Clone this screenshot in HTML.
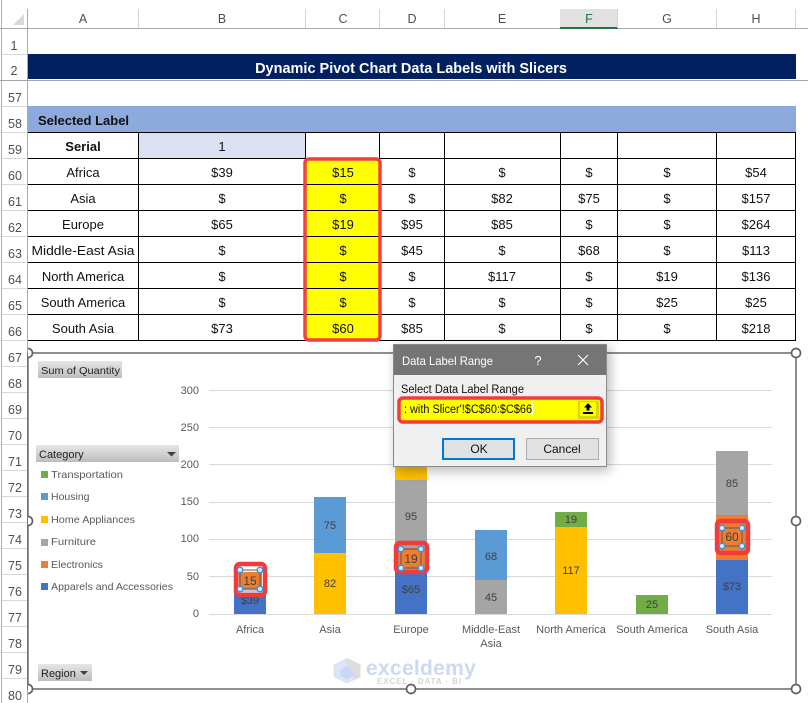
<!DOCTYPE html>
<html><head><meta charset="utf-8"><style>
html,body{margin:0;padding:0;background:#fff;width:808px;height:703px;overflow:hidden}
svg{display:block}
text{font-family:"Liberation Sans",sans-serif}
.c{font-size:13px;fill:#111;text-anchor:middle}
.rn{font-size:12.5px;fill:#4a4f5c;text-anchor:middle}
.ch{font-size:12.5px;fill:#4a4f5c;text-anchor:middle}
.ax{font-size:11px;fill:#595959;text-anchor:middle}
.ay{font-size:11px;fill:#595959;text-anchor:end}
.bl{font-size:11px;fill:#404040;text-anchor:middle}
.lg{font-size:10.5px;fill:#595959}
.pv{font-size:10.5px;fill:#222}
.hd{fill:#d6ebff;stroke:#2f96ee;stroke-width:1.5}
</style></head><body>
<svg width="808" height="703" viewBox="0 0 808 703" xmlns="http://www.w3.org/2000/svg" shape-rendering="crispEdges">
<defs>
<linearGradient id="pg" x1="0" y1="0" x2="0" y2="1"><stop offset="0" stop-color="#e6e6e6"/><stop offset="1" stop-color="#bdbdbd"/></linearGradient>
<filter id="sh" x="-20%" y="-20%" width="140%" height="140%"><feGaussianBlur stdDeviation="6"/></filter>
</defs>
<rect width="808" height="703" fill="#fff"/>

<!-- headers -->
<rect x="2" y="9" width="806" height="19" fill="#fff"/>
<rect x="560" y="9" width="58" height="19" fill="#e1e1e1"/>
<rect x="560" y="27" width="58" height="2" fill="#217346"/>
<rect x="1" y="0" width="1" height="703" fill="#b0b0b0"/>
<rect x="27" y="9" width="1" height="694" fill="#ababab"/>
<rect x="0" y="28" width="560" height="1" fill="#ababab"/><rect x="618" y="28" width="190" height="1" fill="#ababab"/>
<path d="M24 14V25H13Z" fill="#d9d9d9" shape-rendering="auto"/>
<g fill="#d4d4d4">
<rect x="138" y="9" width="1" height="19"/><rect x="305" y="9" width="1" height="19"/><rect x="379" y="9" width="1" height="19"/><rect x="444" y="9" width="1" height="19"/><rect x="617" y="9" width="1" height="19"/><rect x="716" y="9" width="1" height="19"/><rect x="795" y="9" width="1" height="19"/>
</g>
<g class="ch">
<text class="ch" x="83" y="23">A</text><text class="ch" x="222" y="23">B</text><text class="ch" x="343" y="23">C</text><text class="ch" x="412" y="23">D</text><text class="ch" x="502" y="23">E</text><text class="ch" x="589" y="23" style="fill:#217346">F</text><text class="ch" x="667" y="23">G</text><text class="ch" x="756" y="23">H</text>
</g>
<!-- row headers -->
<g fill="#d8d8d8">
<rect x="2" y="54" width="25" height="1"/><rect x="2" y="106" width="25" height="1"/><rect x="2" y="132" width="25" height="1"/><rect x="2" y="158" width="25" height="1"/><rect x="2" y="184" width="25" height="1"/><rect x="2" y="210" width="25" height="1"/><rect x="2" y="236" width="25" height="1"/><rect x="2" y="262" width="25" height="1"/><rect x="2" y="288" width="25" height="1"/><rect x="2" y="314" width="25" height="1"/><rect x="2" y="340" width="25" height="1"/><rect x="2" y="366" width="25" height="1"/><rect x="2" y="392" width="25" height="1"/><rect x="2" y="418" width="25" height="1"/><rect x="2" y="444" width="25" height="1"/><rect x="2" y="470" width="25" height="1"/><rect x="2" y="496" width="25" height="1"/><rect x="2" y="522" width="25" height="1"/><rect x="2" y="548" width="25" height="1"/><rect x="2" y="574" width="25" height="1"/><rect x="2" y="600" width="25" height="1"/><rect x="2" y="626" width="25" height="1"/><rect x="2" y="652" width="25" height="1"/><rect x="2" y="678" width="25" height="1"/>
</g>
<text class="rn" x="14" y="50">1</text><text class="rn" x="14" y="75">2</text><text class="rn" x="15" y="102">57</text><text class="rn" x="15" y="128">58</text><text class="rn" x="15" y="154">59</text><text class="rn" x="15" y="180">60</text><text class="rn" x="15" y="206">61</text><text class="rn" x="15" y="232">62</text><text class="rn" x="15" y="258">63</text><text class="rn" x="15" y="284">64</text><text class="rn" x="15" y="310">65</text><text class="rn" x="15" y="336">66</text><text class="rn" x="15" y="362">67</text><text class="rn" x="15" y="388">68</text><text class="rn" x="15" y="414">69</text><text class="rn" x="15" y="440">70</text><text class="rn" x="15" y="466">71</text><text class="rn" x="15" y="492">72</text><text class="rn" x="15" y="518">73</text><text class="rn" x="15" y="544">74</text><text class="rn" x="15" y="570">75</text><text class="rn" x="15" y="596">76</text><text class="rn" x="15" y="622">77</text><text class="rn" x="15" y="648">78</text><text class="rn" x="15" y="674">79</text><text class="rn" x="15" y="700">80</text>

<!-- title -->
<rect x="28" y="54" width="768" height="25" fill="#002060"/>
<rect x="0" y="80" width="808" height="1" fill="#a6a6a6"/>
<text x="411" y="73" text-anchor="middle" font-weight="700" fill="#fff" style="font-size:14.5px">Dynamic Pivot Chart Data Labels with Slicers</text>
<rect x="28" y="106" width="768" height="26" fill="#8ea9db"/>
<text x="38" y="125" font-weight="700" fill="#111" style="font-size:13px">Selected Label</text>

<!-- table -->
<rect x="139" y="133" width="166" height="25" fill="#d9e1f2"/>
<rect x="306" y="159" width="73" height="181" fill="#ffff00"/>
<g fill="#000">
<rect x="28" y="132" width="768" height="1"/><rect x="28" y="158" width="768" height="1"/><rect x="28" y="184" width="768" height="1"/><rect x="28" y="210" width="768" height="1"/><rect x="28" y="236" width="768" height="1"/><rect x="28" y="262" width="768" height="1"/><rect x="28" y="288" width="768" height="1"/><rect x="28" y="314" width="768" height="1"/><rect x="28" y="340" width="768" height="1"/>
<rect x="138" y="132" width="1" height="209"/><rect x="305" y="132" width="1" height="209"/><rect x="379" y="132" width="1" height="209"/><rect x="444" y="132" width="1" height="209"/><rect x="560" y="132" width="1" height="209"/><rect x="617" y="132" width="1" height="209"/><rect x="716" y="132" width="1" height="209"/><rect x="795" y="132" width="1" height="209"/>
</g>
<text class="c" x="83" y="151" font-weight="700">Serial</text><text class="c" x="222" y="151">1</text>
<text class="c" x="83" y="177">Africa</text><text class="c" x="222" y="177">$39</text><text class="c" x="343" y="177">$15</text><text class="c" x="412" y="177">$</text><text class="c" x="502" y="177">$</text><text class="c" x="589" y="177">$</text><text class="c" x="667" y="177">$</text><text class="c" x="756" y="177">$54</text>
<text class="c" x="83" y="203">Asia</text><text class="c" x="222" y="203">$</text><text class="c" x="343" y="203">$</text><text class="c" x="412" y="203">$</text><text class="c" x="502" y="203">$82</text><text class="c" x="589" y="203">$75</text><text class="c" x="667" y="203">$</text><text class="c" x="756" y="203">$157</text>
<text class="c" x="83" y="229">Europe</text><text class="c" x="222" y="229">$65</text><text class="c" x="343" y="229">$19</text><text class="c" x="412" y="229">$95</text><text class="c" x="502" y="229">$85</text><text class="c" x="589" y="229">$</text><text class="c" x="667" y="229">$</text><text class="c" x="756" y="229">$264</text>
<text class="c" x="83" y="255" textLength="103" lengthAdjust="spacingAndGlyphs">Middle-East Asia</text><text class="c" x="222" y="255">$</text><text class="c" x="343" y="255">$</text><text class="c" x="412" y="255">$45</text><text class="c" x="502" y="255">$</text><text class="c" x="589" y="255">$68</text><text class="c" x="667" y="255">$</text><text class="c" x="756" y="255">$113</text>
<text class="c" x="83" y="281">North America</text><text class="c" x="222" y="281">$</text><text class="c" x="343" y="281">$</text><text class="c" x="412" y="281">$</text><text class="c" x="502" y="281">$117</text><text class="c" x="589" y="281">$</text><text class="c" x="667" y="281">$19</text><text class="c" x="756" y="281">$136</text>
<text class="c" x="83" y="307">South America</text><text class="c" x="222" y="307">$</text><text class="c" x="343" y="307">$</text><text class="c" x="412" y="307">$</text><text class="c" x="502" y="307">$</text><text class="c" x="589" y="307">$</text><text class="c" x="667" y="307">$25</text><text class="c" x="756" y="307">$25</text>
<text class="c" x="83" y="333">South Asia</text><text class="c" x="222" y="333">$73</text><text class="c" x="343" y="333">$60</text><text class="c" x="412" y="333">$85</text><text class="c" x="502" y="333">$</text><text class="c" x="589" y="333">$</text><text class="c" x="667" y="333">$</text><text class="c" x="756" y="333">$218</text>
<rect x="305" y="159" width="75" height="181" rx="4" fill="none" stroke="#f04040" stroke-width="3.5" shape-rendering="auto"/>

<!-- chart frame -->
<rect x="28" y="353" width="768" height="336" fill="#fff" stroke="#5f5f5f" stroke-width="1.4" shape-rendering="auto"/>

<!-- gridlines -->
<g fill="#d9d9d9">
<rect x="209" y="390" width="563" height="1"/><rect x="209" y="427" width="563" height="1"/><rect x="209" y="464" width="563" height="1"/><rect x="209" y="502" width="563" height="1"/><rect x="209" y="539" width="563" height="1"/><rect x="209" y="576" width="563" height="1"/><rect x="209" y="614" width="563" height="1"/>
</g>
<text class="ay" x="199" y="394">300</text><text class="ay" x="199" y="431">250</text><text class="ay" x="199" y="468">200</text><text class="ay" x="199" y="505">150</text><text class="ay" x="199" y="542">100</text><text class="ay" x="199" y="580">50</text><text class="ay" x="199" y="617">0</text>

<!-- bars -->
<rect x="234" y="585" width="32" height="29" fill="#4472c4"/>
<rect x="314" y="553" width="32" height="61" fill="#ffc000"/><rect x="314" y="497" width="32" height="56" fill="#5b9bd5"/>
<rect x="395" y="566" width="32" height="48" fill="#4472c4"/><rect x="395" y="480" width="32" height="71" fill="#a5a5a5"/><rect x="395" y="460" width="32" height="20" fill="#ffc000"/>
<rect x="475" y="580" width="32" height="34" fill="#a5a5a5"/><rect x="475" y="530" width="32" height="50" fill="#5b9bd5"/>
<rect x="555" y="527" width="32" height="87" fill="#ffc000"/><rect x="555" y="512" width="32" height="15" fill="#70ad47"/>
<rect x="636" y="595" width="32" height="19" fill="#70ad47"/>
<rect x="716" y="560" width="32" height="54" fill="#4472c4"/><rect x="716" y="515" width="32" height="45" fill="#ed7d31"/><rect x="716" y="451" width="32" height="64" fill="#a5a5a5"/>

<text class="bl" x="250" y="604">$39</text>
<text class="bl" x="330" y="587">82</text><text class="bl" x="330" y="529">75</text>
<text class="bl" x="411" y="593">$65</text><text class="bl" x="411" y="520">95</text>
<text class="bl" x="491" y="601">45</text><text class="bl" x="491" y="560">68</text>
<text class="bl" x="571" y="574">117</text><text class="bl" x="571" y="523">19</text>
<text class="bl" x="652" y="608">25</text>
<text class="bl" x="732" y="590">$73</text><text class="bl" x="732" y="487">85</text>

<!-- highlighted labels -->
<g shape-rendering="auto">
<rect x="236" y="564" width="29" height="31" rx="4" fill="#fff" stroke="#f23c3c" stroke-width="4.500"/>
<rect x="238.500" y="572" width="23.500" height="17" fill="#ed7d31"/>
<rect x="238.500" y="589" width="23.500" height="3.500" fill="#b9c6dd"/>
<rect x="240" y="570" width="20" height="19" fill="none" stroke="#595959" stroke-width="1"/>
<text class="bl" x="250" y="585" style="font-size:12px">15</text>
<g class="hd"><circle cx="240" cy="570" r="2.800"/><circle cx="260" cy="570" r="2.800"/><circle cx="240" cy="589" r="2.800"/><circle cx="260" cy="589" r="2.800"/></g>

<rect x="396" y="543" width="31" height="29" rx="4" fill="#a5a5a5" stroke="#f23c3c" stroke-width="4.500"/>
<rect x="398.500" y="548" width="26" height="21.500" fill="#ed7d31"/>
<rect x="401" y="549" width="20" height="19" fill="none" stroke="#595959" stroke-width="1"/>
<text class="bl" x="411" y="563" style="font-size:12px">19</text>
<g class="hd"><circle cx="401" cy="549" r="2.800"/><circle cx="421" cy="549" r="2.800"/><circle cx="401" cy="568" r="2.800"/><circle cx="421" cy="568" r="2.800"/></g>

<rect x="717" y="521" width="31" height="32" rx="4" fill="#ed7d31" stroke="#f23c3c" stroke-width="4.500"/>
<rect x="722" y="528" width="20" height="18" fill="none" stroke="#595959" stroke-width="1"/>
<text class="bl" x="732" y="541" style="font-size:12px">60</text>
<g class="hd"><circle cx="722" cy="528" r="2.800"/><circle cx="742" cy="528" r="2.800"/><circle cx="722" cy="546" r="2.800"/><circle cx="742" cy="546" r="2.800"/></g>
</g>

<!-- x axis labels -->
<text class="ax" x="250" y="633">Africa</text><text class="ax" x="330" y="633">Asia</text><text class="ax" x="411" y="633">Europe</text><text class="ax" x="491" y="633">Middle-East</text><text class="ax" x="491" y="647">Asia</text><text class="ax" x="571" y="633">North America</text><text class="ax" x="652" y="633">South America</text><text class="ax" x="732" y="633">South Asia</text>

<!-- pivot buttons + legend -->
<rect x="38" y="361" width="84" height="17" fill="url(#pg)"/>
<text class="pv" x="41" y="374" textLength="79" lengthAdjust="spacingAndGlyphs">Sum of Quantity</text>
<rect x="36" y="445" width="143" height="17" fill="url(#pg)"/>
<text class="pv" x="39" y="458" style="font-size:11px">Category</text>
<path d="M167 452h9l-4.500 4.500z" fill="#404040" shape-rendering="auto"/>
<rect x="38" y="664" width="54" height="17" fill="url(#pg)"/>
<text class="pv" x="41" y="677" style="font-size:11px">Region</text>
<path d="M80 671h8l-4 4z" fill="#404040" shape-rendering="auto"/>
<rect x="41" y="471" width="7" height="7" fill="#70ad47"/><text class="lg" x="51" y="478" textLength="72" lengthAdjust="spacingAndGlyphs">Transportation</text>
<rect x="41" y="493" width="7" height="7" fill="#5b9bd5"/><text class="lg" x="51" y="500">Housing</text>
<rect x="41" y="516" width="7" height="7" fill="#ffc000"/><text class="lg" x="51" y="523" textLength="84" lengthAdjust="spacingAndGlyphs">Home Appliances</text>
<rect x="41" y="539" width="7" height="7" fill="#a5a5a5"/><text class="lg" x="51" y="545" textLength="45" lengthAdjust="spacingAndGlyphs">Furniture</text>
<rect x="41" y="561" width="7" height="7" fill="#ed7d31"/><text class="lg" x="51" y="568" textLength="52" lengthAdjust="spacingAndGlyphs">Electronics</text>
<rect x="41" y="583" width="7" height="7" fill="#4472c4"/><text class="lg" x="51" y="590" textLength="122" lengthAdjust="spacingAndGlyphs">Apparels and Accessories</text>

<!-- watermark -->
<g shape-rendering="auto">
<path d="M347 658l13.500 6.500v12.500l-13.500 6.500-13.500-6.500v-12.500z" fill="#dbe5f8"/>
<path d="M347 658l13.500 6.500v12.500l-7 3.500v-11l-6.500-4z" fill="#dddddd"/>
<path d="M347 666l6.500 4v6l-6.500 3.500-6.500-3.500v-6z" fill="#c9d7f4"/>
<text x="366" y="675" style="font-size:21px;font-weight:700;fill:#cdd9f3;letter-spacing:.3px">exceldemy</text>
<text x="377" y="684" textLength="84" style="font-size:8px;fill:#d4d4d4;font-weight:700">EXCEL · DATA · BI</text>
</g>

<!-- chart handles -->
<g fill="#fff" stroke="#5f5f5f" stroke-width="1.700" shape-rendering="auto">
<circle cx="411" cy="353" r="4.500"/><circle cx="796" cy="353" r="4.500"/><circle cx="796" cy="521" r="4.500"/><circle cx="411" cy="689" r="4.500"/><circle cx="796" cy="689" r="4.500"/>
<path d="M28 348.500a4.500 4.500 0 0 1 0 9" fill="#fff"/><path d="M28 516.500a4.500 4.500 0 0 1 0 9" fill="#fff"/><path d="M28 684.500a4.500 4.500 0 0 1 0 9" fill="#fff"/>
</g>

<!-- dialog -->
<rect x="396" y="347" width="214" height="124" fill="#000" opacity=".28" filter="url(#sh)" shape-rendering="auto"/>
<rect x="393" y="344" width="214" height="123" fill="#f0f0f0"/>
<rect x="393" y="344" width="214" height="31" fill="#757575"/>
<rect x="393.500" y="344.500" width="213" height="122" fill="none" stroke="#8a8a8a"/>
<text x="402" y="365" textLength="91" lengthAdjust="spacingAndGlyphs" style="font-size:12px;fill:#fff">Data Label Range</text>
<text x="538" y="365" text-anchor="middle" style="font-size:13px;fill:#fff">?</text>
<path d="M578 355l10 10M588 355l-10 10" stroke="#fff" stroke-width="1.100" fill="none" shape-rendering="auto"/>
<text x="401" y="393" textLength="123" lengthAdjust="spacingAndGlyphs" style="font-size:11.500px;fill:#111">Select Data Label Range</text>
<rect x="399" y="398" width="203" height="24" rx="4" fill="#ffff00" stroke="#f23c3c" stroke-width="3.500" shape-rendering="auto"/>
<rect x="578" y="401" width="21" height="18" fill="#d8d800"/>
<rect x="580" y="402" width="16" height="14" fill="#ffff00"/>
<text x="404" y="413" textLength="128" lengthAdjust="spacingAndGlyphs" style="font-size:11.500px;fill:#111">: with Slicer'!$C$60:$C$66</text>
<rect x="532" y="401" width="1" height="15" fill="#fff"/>
<path d="M588 403l-4 4.500h2.500v3h3v-3h2.500zM583 412h10v2h-10z" fill="#000" shape-rendering="auto"/>
<rect x="443" y="439" width="71" height="20" fill="#e1e1e1" stroke="#0078d7" stroke-width="2"/>
<text x="479" y="453" text-anchor="middle" style="font-size:12px;fill:#111">OK</text>
<rect x="526.500" y="438.500" width="72" height="21" fill="#e1e1e1" stroke="#adadad"/>
<text x="562" y="453" text-anchor="middle" style="font-size:12px;fill:#111">Cancel</text>
</svg>
</body></html>
